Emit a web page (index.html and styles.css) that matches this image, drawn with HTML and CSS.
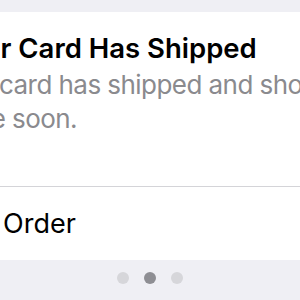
FILE: index.html
```html
<!DOCTYPE html>
<html>
<head>
<meta charset="utf-8">
<link rel="stylesheet" href="styles.css">
</head>
<body>
<div class="screen">
  <div class="card">
    <div class="content">
      <h1 class="title">Your Card Has Shipped</h1>
      <p class="desc">Your card has shipped and should arrive soon.</p>
    </div>
    <div class="divider"></div>
    <div class="action">Track Order</div>
  </div>
  <div class="pager">
    <span class="dot"></span>
    <span class="dot active"></span>
    <span class="dot"></span>
  </div>
</div>
</body>
</html>
```
FILE: styles.css
```css
html, body {
  margin: 0;
  padding: 0;
  background: #efeff4;
  overflow: hidden;
}
.screen {
  width: 300px;
  height: 300px;
  padding-top: 12px;
  box-sizing: border-box;
  font-family: Inter, "Noto Sans", sans-serif;
}
.card {
  background: #ffffff;
  height: 248px;
  display: flex;
  flex-direction: column;
  width: 300px;
}
.content {
  height: 174px;
  box-sizing: border-box;
  padding-top: 19px;
}
.title {
  margin: 0 0 0 -50px;
  font-size: 27.5px;
  font-weight: 600;
  line-height: 34px;
  color: #000;
  white-space: nowrap;
}
.desc {
  margin: 3px 0 0 -62px;
  width: 430px;
  font-size: 26px;
  line-height: 34px;
  letter-spacing: -0.55px;
  color: #8a8a8e;
}
.divider {
  height: 1px;
  background: #d4d4d8;
}
.action {
  flex: 1;
  display: flex;
  align-items: center;
  margin-left: -76px;
  font-size: 27px;
  color: #000;
  white-space: nowrap;
}
.pager {
  display: flex;
  justify-content: center;
  gap: 15px;
  padding-top: 12px;
}
.dot {
  width: 12px;
  height: 12px;
  border-radius: 50%;
  background: #d6d6da;
}
.dot.active {
  background: #8e8e93;
}
```
